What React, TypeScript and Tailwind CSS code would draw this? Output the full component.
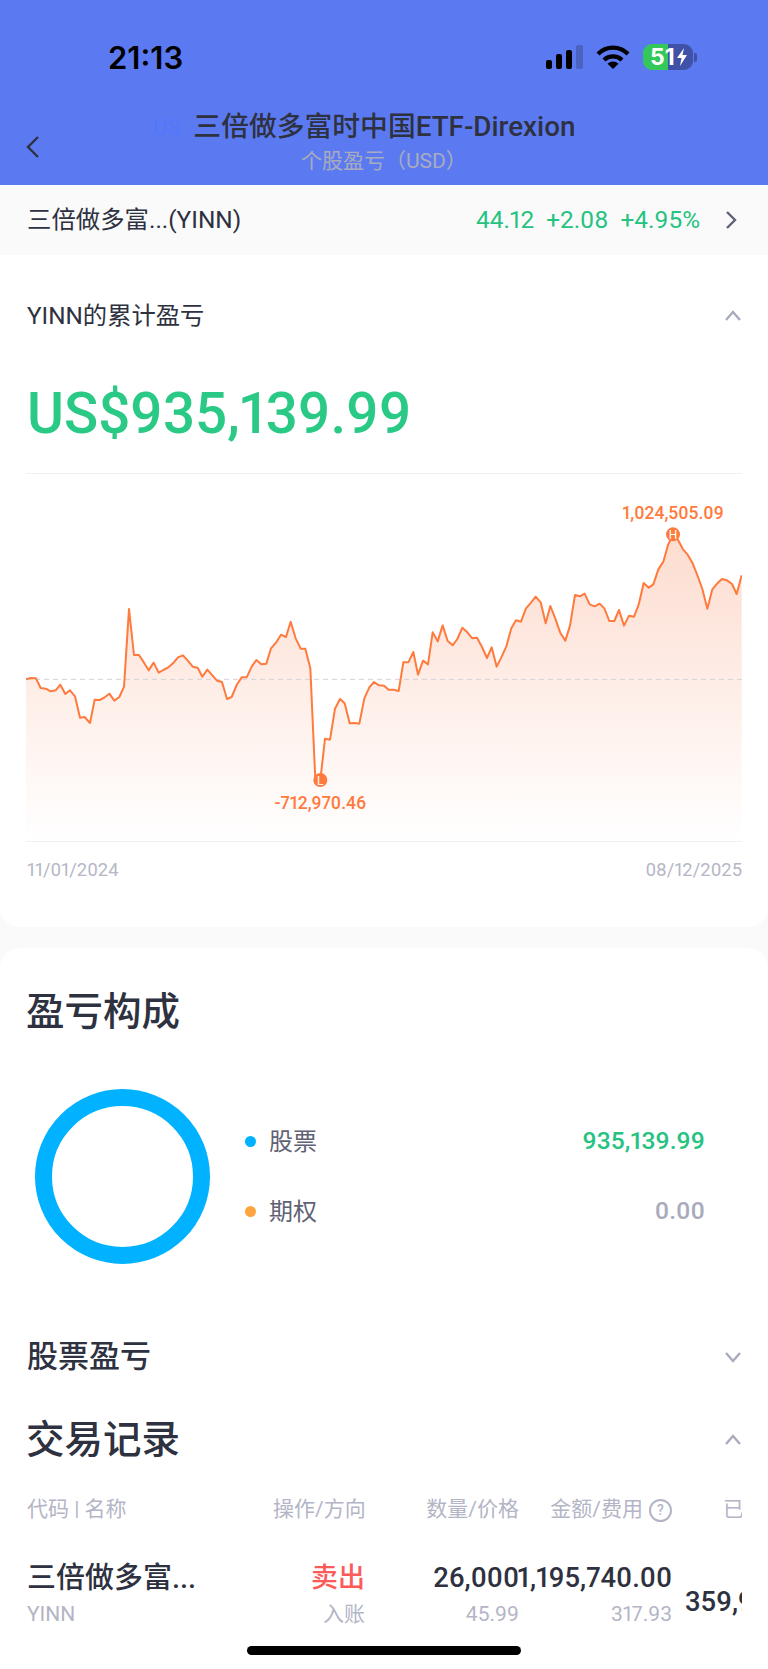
const left = [
  [78, 628], [92, 624], [108, 625], [122, 654], [137, 656], [152, 664], [167, 661], [181, 644], [196, 672], [210, 661],
  [225, 679], [240, 743], [254, 741], [270, 759], [284, 689], [299, 690], [314, 682], [328, 671], [343, 692], [358, 681],
  [372, 650], [387, 417], [402, 555], [417, 555], [432, 578], [446, 601], [461, 578], [476, 608], [490, 600], [505, 592],
  [519, 580], [534, 562], [549, 556], [563, 571], [578, 590], [593, 593], [607, 620], [622, 599], [637, 616], [651, 632],
  [666, 636], [681, 687], [695, 681], [710, 645], [725, 622], [740, 622], [755, 590], [769, 570], [784, 583], [799, 581],
  [813, 535], [828, 518], [843, 494], [858, 501], [872, 455], [887, 505], [902, 536], [916, 536], [931, 595], [946, 930],
  [961, 930], [975, 806], [990, 809], [1005, 716], [1020, 687], [1034, 700], [1049, 760], [1064, 759], [1078, 761],
  [1093, 685], [1108, 652], [1122, 636], [1137, 646],
];

// second half of the series, x counted from the middle of the chart
const right = [
  [0, 647], [14, 659], [29, 659], [44, 663], [58, 577], [73, 577], [88, 546], [102, 614], [117, 572], [132, 583],
  [146, 487], [161, 514], [176, 466], [191, 513], [206, 526], [220, 507], [235, 473], [250, 487], [265, 505], [279, 503],
  [294, 531], [309, 564], [323, 532], [338, 590], [352, 562], [367, 529], [382, 475], [396, 451], [411, 455], [426, 415],
  [441, 398], [455, 380], [470, 397], [485, 460], [499, 408], [514, 446], [529, 489], [544, 512], [558, 467], [573, 375],
  [588, 379], [602, 371], [617, 403], [632, 409], [647, 401], [661, 415], [676, 453], [691, 453], [705, 420], [720, 467],
  [735, 437], [750, 440], [764, 404], [779, 339], [794, 353], [808, 343], [823, 298], [838, 275], [852, 225], [867, 195],
  [882, 210], [897, 238], [911, 254], [926, 280], [941, 318], [955, 357], [970, 416], [985, 358], [1000, 340], [1014, 327],
  [1029, 331], [1044, 342], [1058, 372], [1073, 316],
];

const series = [...left, ...right.map(([x, y]) => [x + 1152, y])];
const line = series.map(([x, y]) => `${x},${y}`).join(" ");
const area = `78,1113 ${line} 2225,1113`;

function Chevron({ dir, className }: { dir: "up" | "down" | "left" | "right"; className: string }) {
  const paths = {
    up: "M2 10 L9 2 L16 10",
    down: "M2 2 L9 10 L16 2",
    left: "M12 2 L2 12 L12 22",
    right: "M2 2 L10 10 L2 18",
  };
  const boxes = { up: "0 0 18 12", down: "0 0 18 12", left: "0 0 14 24", right: "0 0 12 20" };
  return (
    <svg viewBox={boxes[dir]} className={className} fill="none" stroke="currentColor" strokeWidth="2.4">
      <path d={paths[dir]} />
    </svg>
  );
}

function StatusBar() {
  return (
    <div className="flex h-[114px] items-center pl-[108px] pr-[71px]">
      <span className="font-['Inter',sans-serif] text-[31px] font-semibold leading-none text-black">21:13</span>
      <div className="ml-auto flex items-center">
        <div className="flex h-[24px] items-end gap-[4px]">
          <div className="h-[9px] w-[6px] rounded-[2px] bg-black" />
          <div className="h-[15px] w-[6px] rounded-[2px] bg-black" />
          <div className="h-[19px] w-[6px] rounded-[2px] bg-black" />
          <div className="h-[24px] w-[7px] rounded-[2px] bg-[#4a62c0]" />
        </div>
        <svg viewBox="0 0 34 24" className="ml-[13px] h-[24px] w-[34px]">
          <path d="M2 9 A21 21 0 0 1 32 9" fill="none" stroke="#000" strokeWidth="4.2" />
          <path d="M8 15 A13 13 0 0 1 26 15" fill="none" stroke="#000" strokeWidth="4.2" />
          <path d="M17 24 L11.5 18.8 A8 8 0 0 1 22.5 18.8 Z" fill="#000" />
        </svg>
        <div className="ml-[13px] flex items-center">
          <div className="flex h-[26px] w-[50px] items-center rounded-[9px] bg-[linear-gradient(90deg,#34c759_50%,#3f52a8_50%)] pl-[7px] font-['Inter',sans-serif] text-[23px] font-bold leading-none text-white">
            <span>51</span>
            <svg viewBox="0 0 12 18" className="ml-[1px] h-[18px] w-[12px]">
              <path d="M8 0 L1 10 H5.5 L4 18 L11 7 H6.5 Z" fill="#fff" />
            </svg>
          </div>
          <div className="ml-[1px] h-[9px] w-[3px] rounded-r-[2px] bg-[#3f52a8]" />
        </div>
      </div>
    </div>
  );
}

function PnlChart() {
  return (
    <div className="border-y border-[#eeeff2]">
      <svg viewBox="78 12 2148 1101" className="block h-[367px] w-[716px]">
        <defs>
          <linearGradient id="areaFill" gradientUnits="userSpaceOnUse" x1="0" y1="190" x2="0" y2="1113">
            <stop offset="0" stopColor="#fddccf" />
            <stop offset="1" stopColor="#ffffff" />
          </linearGradient>
        </defs>
        <polygon points={area} fill="url(#areaFill)" />
        <line x1="78" y1="628" x2="2226" y2="628" stroke="#d2d2d8" strokeWidth="3" strokeDasharray="15 12" />
        <polyline points={line} fill="none" stroke="#ff7a3d" strokeWidth="6" strokeLinejoin="round" />
        <circle cx="2019" cy="193" r="21" fill="#ff7a3d" />
        <text x="2019" y="207" textAnchor="middle" fontSize="36" fill="#fff">H</text>
        <text x="2019" y="146" textAnchor="middle" fontSize="52.5" fontWeight="500" fill="#ff7a3d">1,024,505.09</text>
        <circle cx="961" cy="930" r="21" fill="#ff7a3d" />
        <text x="961" y="944" textAnchor="middle" fontSize="36" fill="#fff">L</text>
        <text x="961" y="1018" textAnchor="middle" fontSize="52.5" fontWeight="500" fill="#ff7a3d">-712,970.46</text>
      </svg>
    </div>
  );
}

function TradeTable() {
  return (
    <div className="ml-[26px] w-[716px] overflow-hidden">
      <div className="grid h-[70px] grid-cols-[247px_92px_154px_153px_70px] items-center text-[21px] text-[#b3b5c6]">
        <div className="pl-[1px]">代码 | 名称</div>
        <div className="whitespace-nowrap text-right">操作/方向</div>
        <div className="whitespace-nowrap text-right">数量/价格</div>
        <div className="flex items-center justify-end whitespace-nowrap">
          金额/费用
          <span className="ml-[6px] flex h-[23px] w-[23px] shrink-0 items-center justify-center rounded-full border-2 border-[#b3b5c6] text-[14px] font-medium leading-none">?</span>
        </div>
        <div className="overflow-hidden whitespace-nowrap pl-[51px]">已实现</div>
      </div>
      <div className="grid grid-cols-[247px_92px_154px_153px_70px] pt-[16px]">
        <div className="pl-[1px]">
          <div className="text-[29px] font-medium leading-[34px] text-[#2e3140]">三倍做多富...</div>
          <div className="mt-[7px] text-[21px] leading-[24px] text-[#b3b5c6]">YINN</div>
        </div>
        <div className="text-right">
          <div className="text-[27px] font-medium leading-[34px] text-[#fd5a5a]">卖出</div>
          <div className="mt-[7px] text-[21px] leading-[24px] text-[#b3b5c6]">入账</div>
        </div>
        <div className="text-right">
          <div className="text-[27.4px] font-medium leading-[34px] text-[#2e3140]">26,000</div>
          <div className="mt-[7px] text-[21px] leading-[24px] text-[#b3b5c6]">45.99</div>
        </div>
        <div className="text-right">
          <div className="flex justify-end whitespace-nowrap text-[27.4px] font-medium leading-[34px] text-[#2e3140]">1,195,740.00</div>
          <div className="mt-[7px] text-[21px] leading-[24px] text-[#b3b5c6]">317.93</div>
        </div>
        <div className="overflow-hidden whitespace-nowrap pl-[13px] pt-[24px] text-[27.4px] font-medium leading-[34px] text-[#2e3140]">359,900.00</div>
      </div>
    </div>
  );
}

export default function App() {
  return (
    <div className="relative h-[1669px] w-[768px] overflow-hidden bg-[#fafafa] font-['Roboto','Noto_Sans_CJK_SC',sans-serif] proportional-nums">
      <header className="h-[185px] bg-[#5b7af2]">
        <StatusBar />
        <div className="flex pl-[26px]">
          <Chevron dir="left" className="mt-[21px] h-[24px] w-[14px] shrink-0 text-[#2e3140]" />
          <div className="ml-[113px] -mt-[1px]">
            <div className="flex h-[28px] items-center whitespace-nowrap text-[27.8px] font-medium text-[#2e3140]">
              <span className="mr-[13px] text-[22px] font-normal text-[#5277fd]">US</span>
              三倍做多富时中国ETF-Direxion
            </div>
            <div className="ml-[148px] mt-[10px] whitespace-nowrap text-[21px] leading-[20px] text-[#a8abbd]">个股盈亏（USD）</div>
          </div>
        </div>
      </header>

      <div className="flex h-[70px] items-center pl-[27px] pr-[31px] text-[24.4px] text-[#2e3140]">
        <span>三倍做多富...(YINN)</span>
        <span className="ml-auto flex gap-[12px] text-[#26c281]">
          <span>44.12</span>
          <span>+2.08</span>
          <span>+4.95%</span>
        </span>
        <Chevron dir="right" className="ml-[25px] h-[20px] w-[12px] text-[#5f6275]" />
      </div>

      <section className="rounded-b-[20px] bg-white px-[26px] pb-[29px]">
        <div className="flex h-[122px] items-center pl-[1px] text-[24.3px] text-[#2e3140]">
          <span>YINN的累计盈亏</span>
          <Chevron dir="up" className="ml-auto h-[12px] w-[18px] text-[#a8abbb]" />
        </div>
        <div className="mb-[24px] mt-[2px] h-[70px] pl-[1px] text-[56.5px] font-medium leading-[70px] text-[#2bc986]">US$935,139.99</div>
        <PnlChart />
        <div className="flex h-[56px] items-center justify-between pl-[1px] text-[18.4px] text-[#b5b7c6]">
          <span>11/01/2024</span>
          <span>08/12/2025</span>
        </div>
      </section>

      <section className="mt-[21px] h-[800px] rounded-t-[20px] bg-white">
        <div className="flex h-[127px] items-center pl-[26px] text-[38.5px] font-medium text-[#2e3140]">盈亏构成</div>
        <div className="flex items-center pl-[35px] pr-[63px] pt-[14px]">
          <div className="h-[175px] w-[175px] shrink-0 rounded-full border-[17px] border-[#00b2ff]" />
          <div className="ml-[35px] flex-1">
            <div className="flex h-[70px] items-center">
              <span className="h-[11px] w-[11px] rounded-full bg-[#00b2ff]" />
              <span className="ml-[13px] text-[24px] text-[#5f6275]">股票</span>
              <span className="ml-auto text-[24.6px] font-medium text-[#26c281]">935,139.99</span>
            </div>
            <div className="flex h-[70px] items-center">
              <span className="h-[11px] w-[11px] rounded-full bg-[#ffa540]" />
              <span className="ml-[13px] text-[24px] text-[#5f6275]">期权</span>
              <span className="ml-auto text-[24.6px] font-medium text-[#a9abbc]">0.00</span>
            </div>
          </div>
        </div>
        <div className="mt-[58px] flex h-[70px] items-center pl-[27px] pr-[26px] text-[31px] font-medium text-[#2e3140]">
          <span>股票盈亏</span>
          <Chevron dir="down" className="ml-auto h-[12px] w-[18px] text-[#a8abbb]" />
        </div>
        <div className="mt-[13px] flex h-[70px] items-center pl-[26px] pr-[26px] text-[38.5px] font-medium text-[#2e3140]">
          <span>交易记录</span>
          <Chevron dir="up" className="ml-auto h-[12px] w-[18px] text-[#a8abbb]" />
        </div>
        <TradeTable />
      </section>

      <div className="absolute bottom-[14px] left-[247px] h-[9px] w-[274px] rounded-full bg-black" />
    </div>
  );
}
